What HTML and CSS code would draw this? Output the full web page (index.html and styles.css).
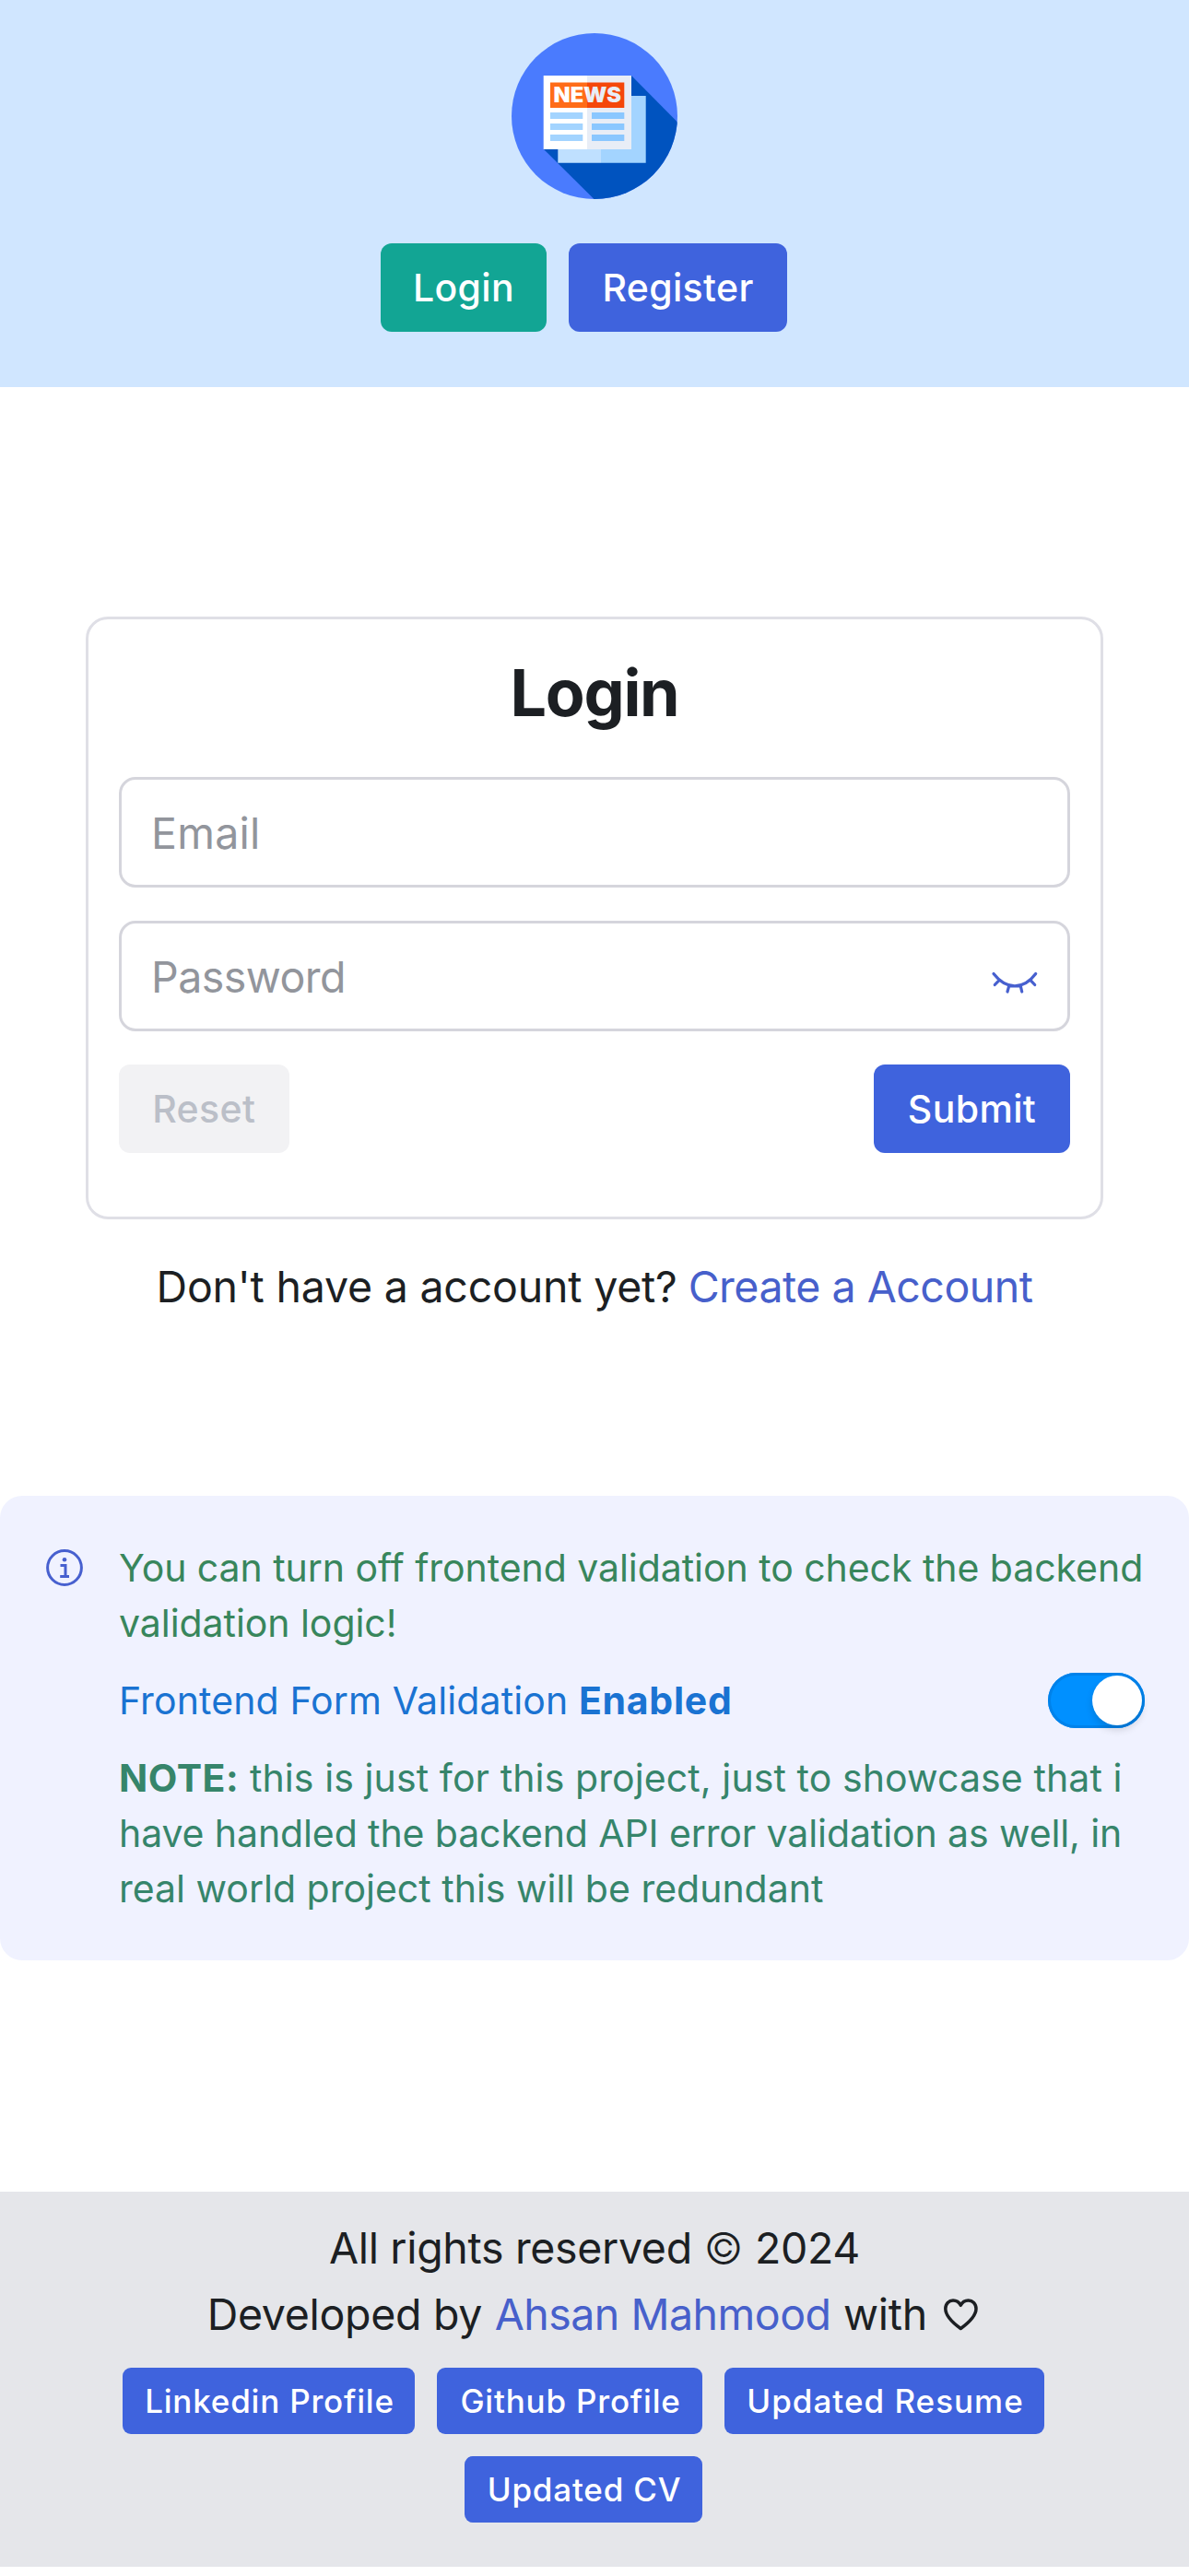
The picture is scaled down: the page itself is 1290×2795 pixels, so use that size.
FILE: index.html
```
<!DOCTYPE html>
<html lang="en">
<head>
<meta charset="utf-8">
<title>Login</title>
<link rel="stylesheet" href="styles.css">
</head>
<body>
<header class="header">
  <svg class="logo" viewBox="0 0 180 180">
    <defs>
      <clipPath id="disc"><circle cx="90" cy="90" r="90"/></clipPath>
      <linearGradient id="fold" gradientUnits="userSpaceOnUse" x1="81.9" y1="0" x2="82.1" y2="0"><stop offset="0" stop-color="#fff"/><stop offset="1" stop-color="#e8edf6"/></linearGradient>
    </defs>
    <circle cx="90" cy="90" r="90" fill="#4a7bfe"/>
    <path d="M130 46 230 147V240H150L35 126Z" fill="#0053bf" clip-path="url(#disc)"/>
    <path d="M50.3 68H97v72.7H50.3Z" fill="#bfe0ff"/>
    <path d="M97 68h48.7v72.7H97Z" fill="#a3d4ff"/>
    <path d="M34.7 46H82v80H34.7Z" fill="#fff"/>
    <path d="M82 46h48v80H82Z" fill="#e8edf6"/>
    <path d="M42 53.5h40V81H42Z" fill="#ff6c18"/>
    <path d="M82 53.5h40.3V81H82Z" fill="#f5470a"/>
    <text x="45.5" y="75.4" class="logo-text" textLength="73.5" lengthAdjust="spacingAndGlyphs" fill="url(#fold)">NEWS</text>
    <path d="M42 86h35.3v7H42ZM42 98h35.3v7H42ZM42 110h35.3v7H42Z" fill="#a3d4ff"/>
    <path d="M87 86h35.3v7H87ZM87 98h35.3v7H87ZM87 110h35.3v7H87Z" fill="#8ac7ff"/>
  </svg>
  <nav class="nav">
    <button class="btn btn-login">Login</button>
    <button class="btn btn-register">Register</button>
  </nav>
</header>

<main class="main">
  <section class="card">
    <h1 class="card-title">Login</h1>
    <div class="field"><input class="input email" type="text" placeholder="Email"></div>
    <div class="field">
      <input class="input password" type="password" placeholder="Password">
      <svg class="eye" viewBox="15 11 54 36" fill="none" stroke="#4760cf" stroke-width="3.2" stroke-linecap="round"><path d="M18 25.5C26 35.8 33.500 38.800 41 38.800S56 35.800 63.700 25.500M23.800 32.800 19.300 37.500M58.300 32.800 62.700 37.500M34.700 38.800 33 45M47.300 38.800 48.700 45"/></svg>
    </div>
    <div class="actions">
      <button class="btn btn-reset" disabled>Reset</button>
      <button class="btn btn-submit">Submit</button>
    </div>
  </section>
  <p class="signup"><span>Don't have a account yet?</span><a class="link">Create a Account</a></p>
</main>

<aside class="notice">
  <svg class="info" viewBox="0 0 42 42" fill="none" stroke="#4760cf" stroke-width="3"><circle cx="21" cy="21" r="18.400"/><circle cx="21" cy="12.200" r="2.300" fill="#4760cf" stroke="none"/><path d="M16.500 18.400H22V31M16.200 30.500H26"/></svg>
  <div class="notice-body">
    <p class="hint">You can turn off frontend validation to check the backend<br>validation logic!</p>
    <div class="toggle-row">
      <p class="toggle-label">Frontend Form Validation <b>Enabled</b></p>
      <span class="switch"><span class="knob"></span></span>
    </div>
    <p class="note"><b>NOTE:</b><span class="loose"> this is just for this project, just to showcase that i</span><br><span class="tight">have handled the backend API error validation as well, in</span><br>real world project this will be redundant</p>
  </div>
</aside>

<footer class="footer">
  <p class="line rights"><span>All rights reserved</span><span class="copy">©</span><span>2024</span></p>
  <p class="line author"><span>Developed by</span><a class="link">Ahsan Mahmood</a><span>with</span>
    <svg class="heart" viewBox="268 88 46 46" fill="none" stroke="#1c1f23" stroke-width="3.500" stroke-linejoin="round"><path d="M291.300 126.500C283 120.500 274.800 113 274.800 105 274.800 99.500 278.500 96 283 96 287 96 289.800 98.300 291.300 101.300 292.800 98.300 295.600 96 299.600 96 304.200 96 308 99.500 308 105 308 113 299.600 120.500 291.300 126.500Z"/></svg>
  </p>
  <div class="links">
    <button class="chip linkedin">Linkedin Profile</button>
    <button class="chip github">Github Profile</button>
    <button class="chip resume">Updated Resume</button>
    <button class="chip cv">Updated CV</button>
  </div>
</footer>
</body>
</html>
```
FILE: styles.css
```
* { box-sizing: border-box; }
body { margin: 0; background: #fff; color: #1c1f23; font-family: Inter, "Liberation Sans", sans-serif; font-size: 46.5px; }
p, h1 { margin: 0; }
button { border: 0; padding: 0; font-family: inherit; white-space: nowrap; }

.header { height: 420px; padding-top: 36px; background: #d0e6ff; display: flex; flex-direction: column; align-items: center; gap: 48px; }
.logo { width: 180px; height: 180px; display: block; }
.logo-text { font-size: 22.4px; font-weight: 900; }
.nav { display: flex; gap: 24px; margin-right: 24px; }

.btn { height: 96px; border-radius: 12px; font-size: 41px; font-weight: 500; letter-spacing: .35px; color: #fff; background: #3f63dd; }
.btn-login { width: 180px; padding-left: 1px; background: #12a594; }
.btn-register { width: 237px; padding-left: 1px; }
.btn-reset { width: 184.5px; background: #f2f2f4; color: #bbbfc8; }
.btn-submit { width: 213px; }

.main { padding: 249px 93px 0; }
.card { height: 654px; padding: 36px 33px 0; border: 3px solid #dfdfe6; border-radius: 24px; }
.card-title { height: 87px; line-height: 87px; margin-bottom: 48px; text-align: center; font-size: 70px; font-weight: 700; letter-spacing: -1.3px; }
.field { height: 120px; margin-bottom: 36px; padding: 2px 29px 0 32px; border: 3px solid #d5d5dc; border-radius: 18px; display: flex; align-items: center; }
.input { flex: 1; min-width: 0; border: 0; padding: 0; outline: 0; background: none; font: inherit; }
.input::placeholder { color: #92959c; opacity: 1; }
.email { letter-spacing: .24px; }
.password { letter-spacing: -.53px; }
.eye { width: 54px; height: 36px; }
.actions { display: flex; justify-content: space-between; }
.signup { height: 72px; margin-top: 36px; line-height: 74px; display: flex; justify-content: center; gap: 12px; letter-spacing: -.21px; white-space: nowrap; }
.link { color: #4760cb; letter-spacing: -.5px; }

.notice { height: 504px; margin-top: 192px; padding: 48px 48px 0 49px; border-radius: 24px; background: #f0f2ff; display: flex; gap: 38px; }
.info { flex: none; width: 42px; height: 42px; margin-top: 9px; }
.notice-body { flex: 1; font-size: 41px; line-height: 60px; display: flex; flex-direction: column; gap: 24px; white-space: nowrap; }
.hint { color: #38865c; letter-spacing: -.05px; }
.toggle-row { height: 60px; display: flex; justify-content: space-between; color: #1a73d2; letter-spacing: .12px; }
.toggle-row b { letter-spacing: .73px; }
.switch { width: 105px; height: 60px; padding: 3px; border-radius: 30px; background: #0090ff; box-shadow: inset 0 0 0 3px #0082ea; display: flex; justify-content: flex-end; }
.knob { width: 54px; height: 54px; border-radius: 50%; background: #fff; box-shadow: 0 5px 9px rgba(0, 0, 0, .14); }
.note { color: #36856b; }
.note b { letter-spacing: .55px; }
.loose { letter-spacing: .1px; }
.tight { letter-spacing: -.1px; }

.footer { height: 407.5px; margin-top: 250.5px; padding-top: 25.5px; background: #e5e6ea; }
.line { height: 72px; line-height: 72px; display: flex; justify-content: center; align-items: center; white-space: nowrap; }
.rights { gap: 13px; letter-spacing: -.33px; }
.copy { font-weight: 300; }
.author { gap: 13.5px; letter-spacing: -.3px; }
.heart { width: 46px; height: 46px; }
.links { margin: 22.25px 24px 0 0; display: flex; flex-wrap: wrap; justify-content: center; gap: 24px; padding: 0 96px; }
.chip { height: 72px; padding-left: 2px; border-radius: 9px; background: #3f63dd; color: #fff; font-size: 35px; font-weight: 500; letter-spacing: .8px; }
.linkedin { width: 317px; }
.github { width: 288px; }
.resume { width: 347px; letter-spacing: 1px; }
.cv { width: 258px; }
```
